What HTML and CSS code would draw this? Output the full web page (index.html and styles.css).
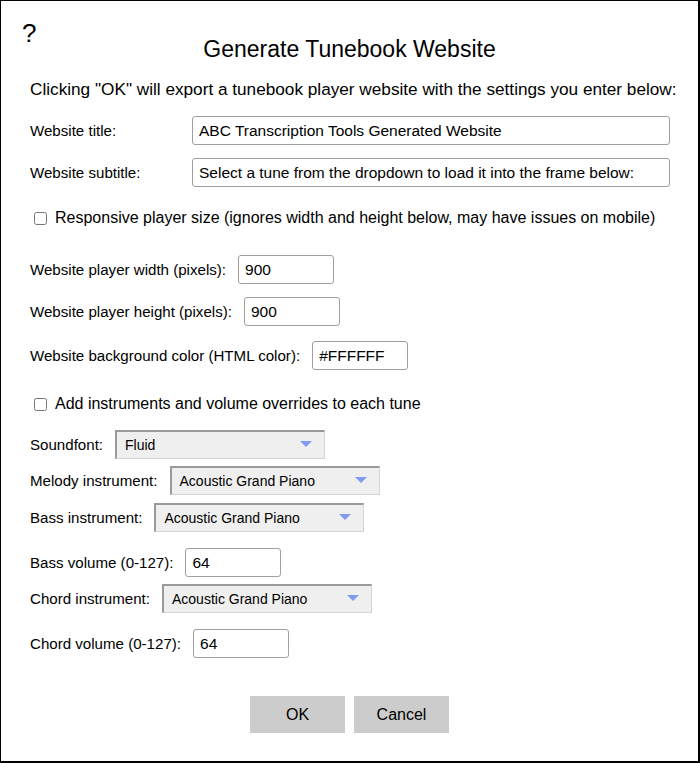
FILE: index.html
```html
<!DOCTYPE html>
<html>
<head>
<meta charset="utf-8">
<link rel="stylesheet" href="styles.css">
</head>
<body>
<div class="dialog">
  <div class="help">?</div>
  <h1 class="title">Generate Tunebook Website</h1>
  <p class="intro">Clicking "OK" will export a tunebook player website with the settings you enter below:</p>

  <div class="row r-title"><label class="wide">Website title:</label><input class="text long" type="text" value="ABC Transcription Tools Generated Website"></div>
  <div class="row r-sub"><label class="wide">Website subtitle:</label><input class="text long" type="text" value="Select a tune from the dropdown to load it into the frame below:"></div>

  <div class="row check r-resp"><input type="checkbox"> Responsive player size (ignores width and height below, may have issues on mobile)</div>

  <div class="row r-width"><label>Website player width (pixels):</label><input class="text short" type="text" value="900"></div>
  <div class="row r-height"><label>Website player height (pixels):</label><input class="text short" type="text" value="900"></div>
  <div class="row r-bg"><label>Website background color (HTML color):</label><input class="text short" type="text" value="#FFFFFF"></div>

  <div class="row check r-inst"><input type="checkbox"> Add instruments and volume overrides to each tune</div>

  <div class="row r-sf"><label>Soundfont:</label><div class="select"><span>Fluid</span><i class="arrow"></i></div></div>
  <div class="row r-mel"><label>Melody instrument:</label><div class="select"><span>Acoustic Grand Piano</span><i class="arrow"></i></div></div>
  <div class="row r-bass"><label>Bass instrument:</label><div class="select"><span>Acoustic Grand Piano</span><i class="arrow"></i></div></div>
  <div class="row r-bvol"><label>Bass volume (0-127):</label><input class="text short" type="text" value="64"></div>
  <div class="row r-chord"><label>Chord instrument:</label><div class="select"><span>Acoustic Grand Piano</span><i class="arrow"></i></div></div>
  <div class="row r-cvol"><label>Chord volume (0-127):</label><input class="text short" type="text" value="64"></div>

  <div class="buttons"><button class="btn">OK</button><button class="btn">Cancel</button></div>
</div>
</body>
</html>
```
FILE: styles.css
```css
html, body { margin: 0; padding: 0; background: #fff; }
body { font-family: "Liberation Sans", Arial, sans-serif; color: #000; }
.dialog {
  box-sizing: border-box;
  width: 700px;
  height: 763px;
  border: 1px solid #000;
  border-right-width: 2px;
  border-bottom-width: 2px;
  padding: 0 0 0 29px;
  position: relative;
}
.help {
  position: absolute;
  left: 21px;
  top: 17px;
  font-size: 26px;
  line-height: 30px;
}
.title {
  margin: 0;
  padding-top: 35px;
  margin-left: -29px;
  text-align: center;
  font-weight: normal;
  font-size: 23px;
  line-height: 26px;
}
.intro {
  margin: 17px 0 0 0;
  font-size: 17.2px;
  line-height: 20px;
  white-space: nowrap;
}
.row {
  display: flex;
  align-items: center;
  font-size: 15.1px;
}
.row label { margin-right: 12px; }
.row label.wide { width: 162px; margin-right: 0; }
.text {
  box-sizing: border-box;
  height: 29px;
  border: 1px solid #a0a0a0;
  border-radius: 3px;
  font-family: "Liberation Sans", Arial, sans-serif;
  font-size: 15.5px;
  padding: 0 6px;
  color: #000;
  background: #fff;
  outline: none;
  margin: 0;
}
.long { width: 478px; }
.short { width: 96px; }
.check { height: 20px; font-size: 16px; }
.check input { width: 13px; height: 13px; margin: 0 8px 0 4px; }
.select {
  box-sizing: border-box;
  width: 210px;
  height: 29px;
  background: #efefef;
  border: 1px solid #d4d4d4;
  border-top: 2px solid #9a9a9a;
  border-left: 2px solid #9a9a9a;
  display: flex;
  align-items: center;
  padding-left: 8px;
  font-size: 14px;
  position: relative;
}
.arrow {
  position: absolute;
  right: 12px;
  top: 9px;
  width: 0;
  height: 0;
  border-left: 6px solid transparent;
  border-right: 6px solid transparent;
  border-top: 6px solid #7f9cf0;
}
.r-title { margin-top: 17px; }
.r-sub { margin-top: 13px; }
.r-resp { margin-top: 21px; }
.r-width { margin-top: 27px; }
.r-height { margin-top: 13px; }
.r-bg { margin-top: 15px; }
.r-inst { margin-top: 24px; }
.r-sf { margin-top: 16px; }
.r-mel { margin-top: 7px; }
.r-bass { margin-top: 8px; }
.r-bvol { margin-top: 16px; }
.r-chord { margin-top: 7px; }
.r-cvol { margin-top: 16px; }
.buttons {
  display: flex;
  justify-content: center;
  gap: 9px;
  margin-top: 38px;
  margin-left: -29px;
}
.btn {
  width: 95px;
  height: 37px;
  border: none;
  background: #cccccc;
  font-family: "Liberation Sans", Arial, sans-serif;
  font-size: 16px;
  color: #000;
  margin: 0;
  padding: 0;
}
```
